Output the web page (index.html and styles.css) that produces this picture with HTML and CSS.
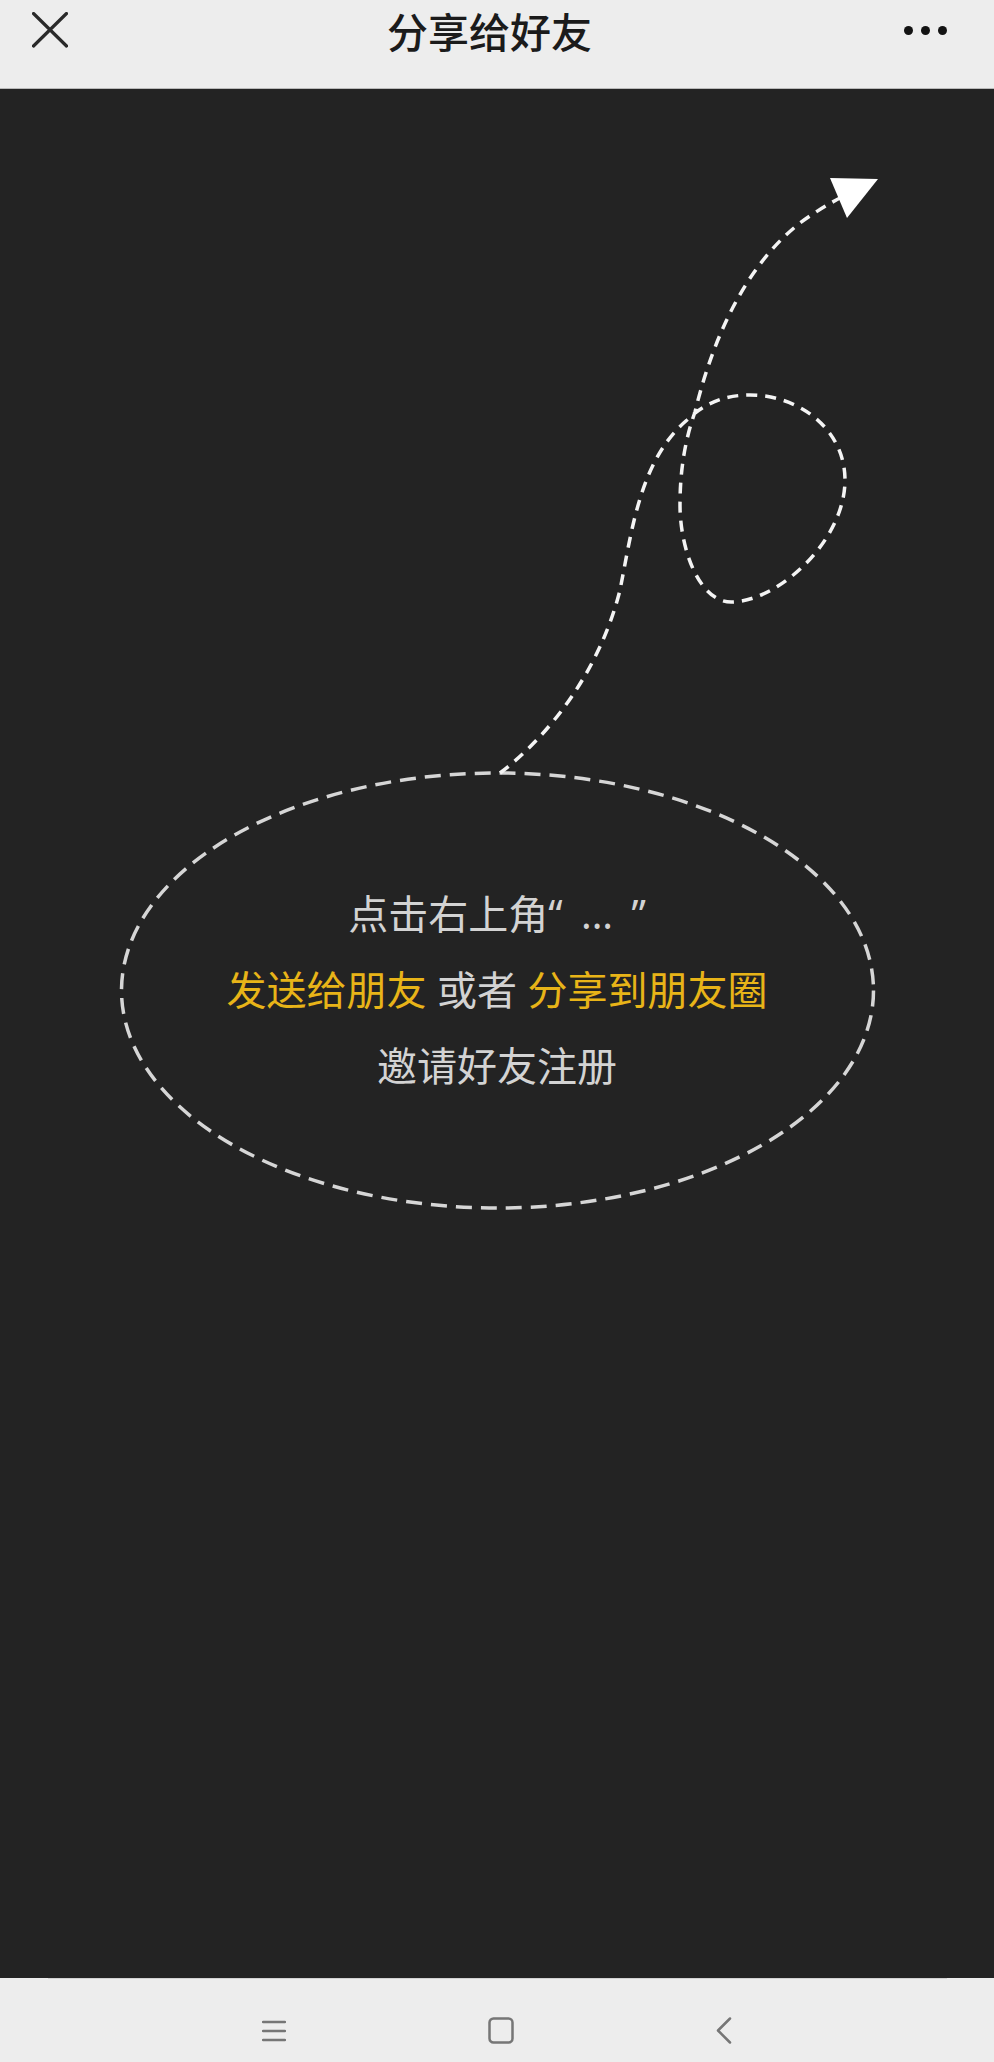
FILE: index.html
```html
<!DOCTYPE html>
<html lang="zh-CN">
<head>
    <meta charset="UTF-8">
    <meta name="viewport" content="width=device-width, initial-scale=1.0">
    <title>分享给好友</title>
    <link rel="stylesheet" href="styles.css">
</head>
<body>

    <!-- 顶部标题栏 -->
    <div class="topbar">
        <span class="topbar-close">
            <svg width="36" height="36" viewBox="0 0 36 36">
                <path d="M1.5 1.5 L34.5 34 M34.5 1.5 L1.5 34" stroke="#2a2a2a" stroke-width="3.2" fill="none" stroke-linecap="round"/>
            </svg>
        </span>
        <h1 class="topbar-title">分享给好友</h1>
        <span class="topbar-more">
            <i></i><i></i><i></i>
        </span>
    </div>

    <!-- 引导遮罩 -->
    <div class="guide">
        <svg class="guide-lines" viewBox="0 89 994 1889" width="994" height="1889">
            <ellipse cx="497.5" cy="990.5" rx="376" ry="217.5" fill="none" stroke="#d6d6d6" stroke-width="3.5" stroke-dasharray="16 9"/>
            <path d="M500 773
                     C550 735 600 670 620 590
                     C632 530 640 460 687 420
                     C705 403 725 395 750 395
                     C800 395 845 430 845 480
                     C845 540 780 600 733 602
                     C700 604 680 550 680 505
                     C680 470 685 440 695 412
                     C710 350 740 270 800 223
                     C815 212 830 203 842 197"
                  fill="none" stroke="#f4f4f4" stroke-width="3.5" stroke-dasharray="11 8"/>
            <polygon points="830,178 878,179 847,218" fill="#ffffff"/>
        </svg>

        <div class="guide-text">
            <p class="guide-tip">点击右上角“ ... ”</p>
            <p><span class="hl">发送给朋友</span> 或者 <span class="hl">分享到朋友圈</span></p>
            <p>邀请好友注册</p>
        </div>
    </div>

    <!-- 底部导航条 -->
    <div class="navbar">
        <svg width="24" height="22" viewBox="0 0 24 22">
            <path d="M1 2 H23 M1 11 H23 M1 20 H23" stroke="#767676" stroke-width="2.5" fill="none" stroke-linecap="round"/>
        </svg>
        <svg width="26" height="27" viewBox="0 0 26 27">
            <rect x="1.5" y="1.5" width="23" height="24" rx="4" stroke="#767676" stroke-width="2.5" fill="none"/>
        </svg>
        <svg width="16" height="27" viewBox="0 0 16 27">
            <path d="M14 1.5 L2 13.5 L14 25.5" stroke="#767676" stroke-width="2.5" fill="none" stroke-linecap="round" stroke-linejoin="round"/>
        </svg>
    </div>

</body>
</html>
```

FILE: styles.css
```css
body {
    margin: 0;
    background-color: #232323;
    font-family: "Noto Sans", "Noto Sans CJK SC", sans-serif;
}

/* 顶部标题栏 */
.topbar {
    display: grid;
    grid-template-columns: 1fr auto 1fr;
    align-items: center;
    height: 89px;
    box-sizing: border-box;
    padding: 0 47px 29px 32px;
    background-color: #ededed;
    border-bottom: 1px solid #b9b9b9;
}
.topbar-close {
    display: flex;
}
.topbar-title {
    margin: 0;
    font-size: 41px;
    font-weight: 500;
    line-height: 60px;
    color: #1b1b1b;
    font-family: "Noto Sans CJK SC", sans-serif;
}
.topbar-more {
    display: flex;
    justify-content: flex-end;
    gap: 8px;
}
.topbar-more i {
    width: 9px;
    height: 9px;
    border-radius: 50%;
    background-color: #131313;
}

/* 引导区域 */
.guide {
    position: relative;
    height: 1889px;
    box-sizing: border-box;
    padding-top: 787px;
}
.guide-lines {
    position: absolute;
    top: 0;
    left: 0;
}
.guide-text {
    position: relative;
    text-align: center;
    color: #d3d3d3;
    font-size: 40px;
    line-height: 76px;
}
.guide-text p {
    margin: 0;
}
.guide-tip {
    word-spacing: 8px;
}
.hl {
    color: #e8b418; /* 黄色 */
}

/* 底部导航条 */
.navbar {
    display: flex;
    justify-content: center;
    align-items: center;
    gap: 202px;
    height: 84px;
    box-sizing: border-box;
    padding-top: 21px;
    background-color: #ededed;
    position: relative;
}
.navbar::before {
    content: "";
    position: absolute;
    top: 0;
    left: 48px;
    right: 47px;
    height: 1px;
    background-color: #d2d2d2;
}
```
